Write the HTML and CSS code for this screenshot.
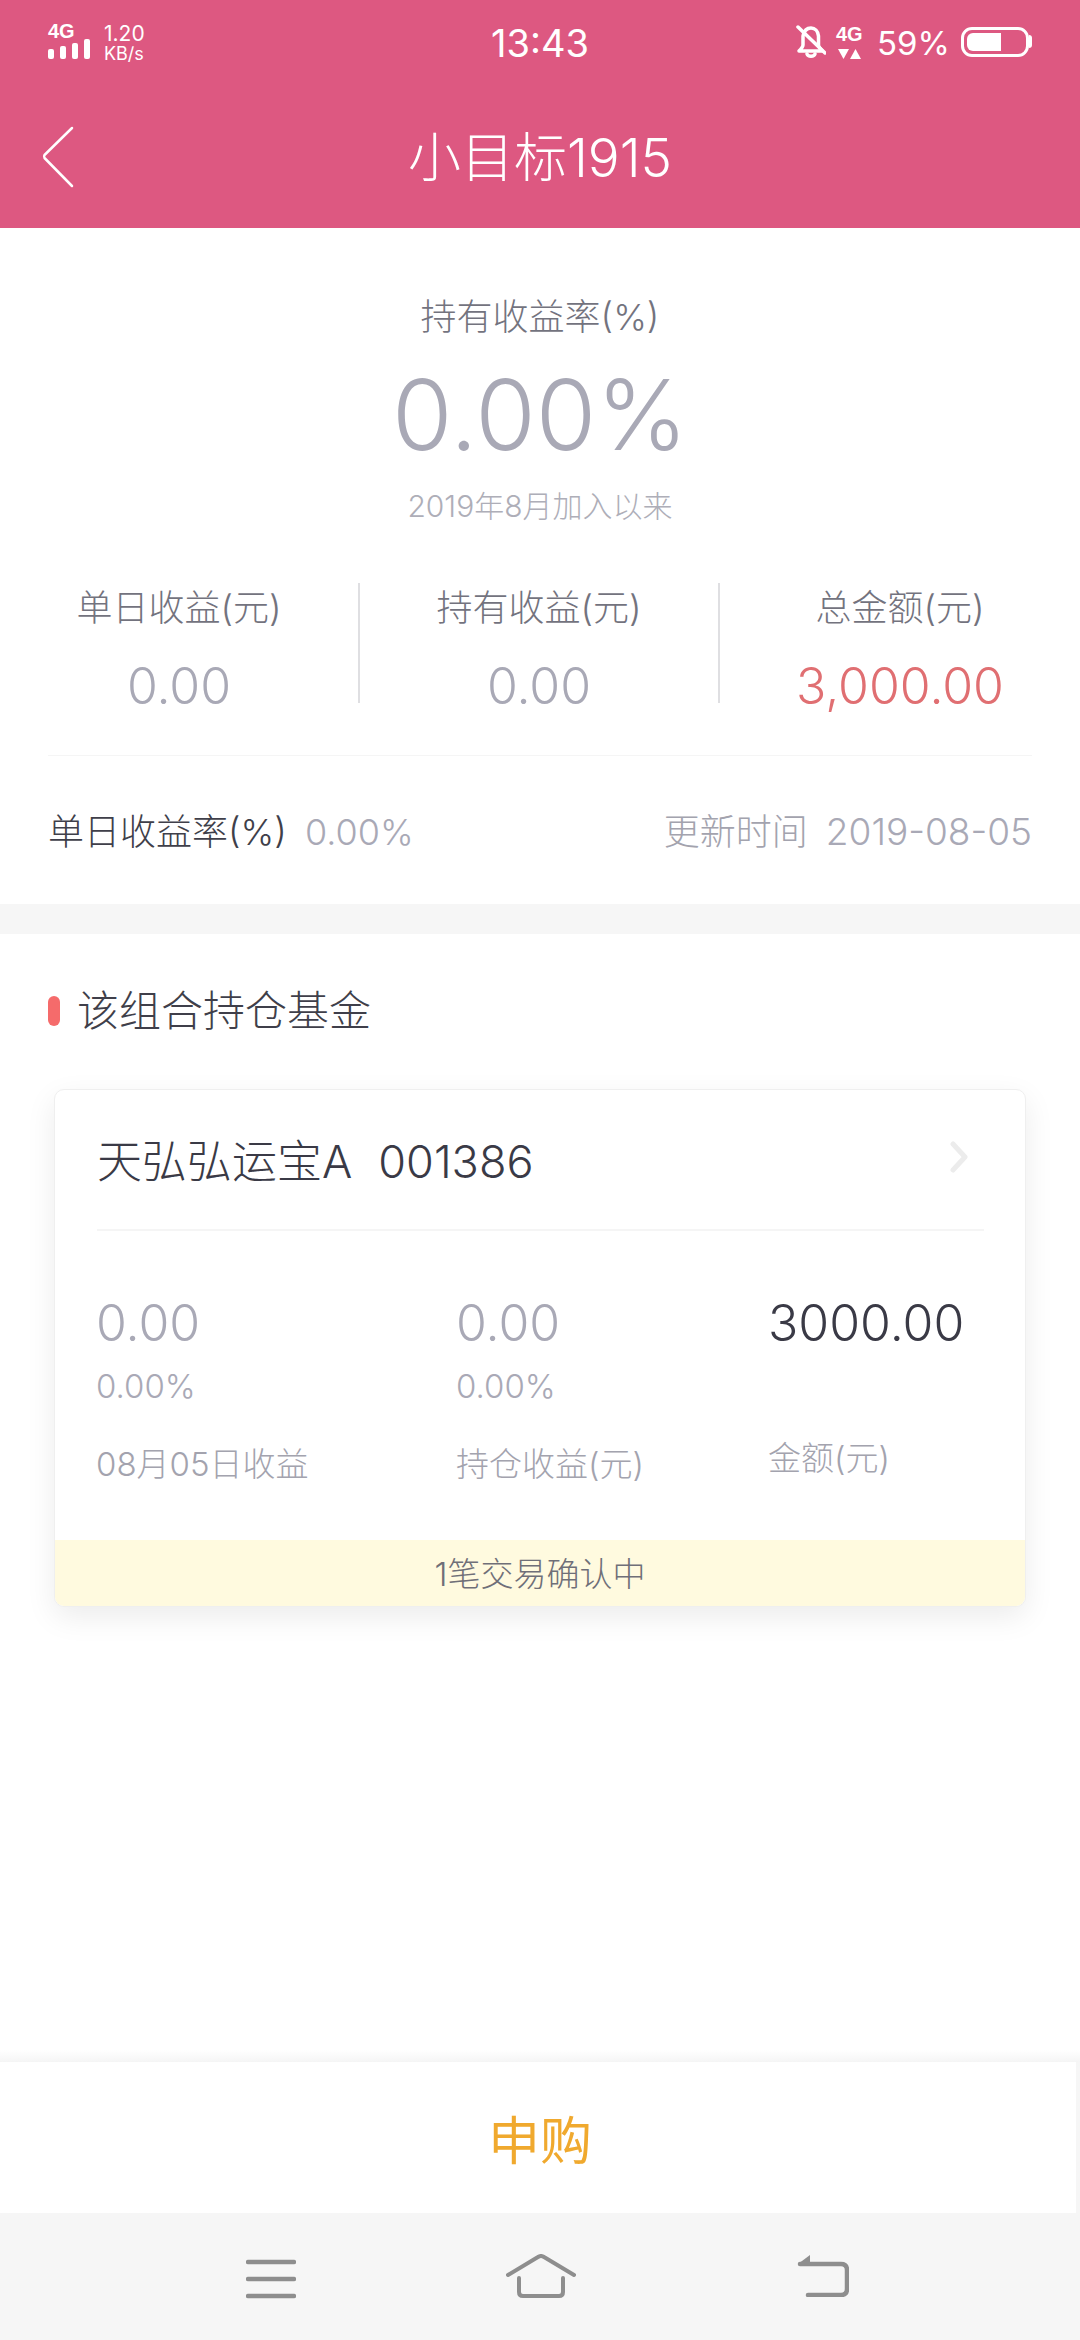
FILE: index.html
```html
<!DOCTYPE html>
<html lang="zh-CN">

<head>
    <meta charset="UTF-8">
    <meta name="viewport" content="width=device-width, initial-scale=1.0">
    <title>小目标1915</title>
    <link rel="stylesheet" href="styles.css">
</head>

<body>
    <div class="page">
        <header class="top">
            <div class="status">
                <div class="status-left">
                    <div class="signal">
                        <span class="net">4G</span>
                        <div class="bars">
                            <i class="bar bar1"></i>
                            <i class="bar bar2"></i>
                            <i class="bar bar3"></i>
                            <i class="bar bar4"></i>
                        </div>
                    </div>
                    <div class="speed">
                        <span class="speed-num">1.20</span>
                        <span class="speed-unit">KB/s</span>
                    </div>
                </div>
                <div class="clock">13:43</div>
                <div class="status-right">
                    <svg class="bell" width="30" height="34" viewBox="0 0 30 34" fill="none" stroke="#fff" stroke-width="3.500" stroke-linecap="round" stroke-linejoin="round">
                        <path d="M7 11c1-5 4-8 8-8s7 3 7.500 8v9c0 2 2 4 4 6H3c2-2 4-4 4-6z" />
                        <path d="M11 29c1 3 7 3 8 0" />
                        <path d="M2 2l27 26" />
                    </svg>
                    <div class="net-small">
                        <span class="net">4G</span>
                        <svg width="27" height="10" viewBox="0 0 27 10" fill="#fff">
                            <path d="M2 0h11l-5.500 10z" />
                            <path d="M19.500 0l5.500 10H14z" />
                        </svg>
                    </div>
                    <span class="percent">59%</span>
                    <div class="battery">
                        <div class="battery-level"></div>
                    </div>
                    <div class="battery-nub"></div>
                </div>
            </div>
            <div class="titlebar">
                <svg class="back" width="34" height="62" viewBox="0 0 34 62" fill="none" stroke="#fff" stroke-width="2.500" stroke-linecap="round" stroke-linejoin="round">
                    <path d="M31 2L3.500 29q-1 1.500 0 3L31 60" />
                </svg>
                <h1>小目标1915</h1>
            </div>
        </header>

        <main class="content">
            <section class="summary">
                <p class="summary-label">持有收益率(%)</p>
                <p class="summary-rate">0.00%</p>
                <p class="summary-since">2019年8月加入以来</p>
            </section>

            <section class="stats">
                <div class="stat">
                    <p class="stat-label">单日收益(元)</p>
                    <p class="stat-value">0.00</p>
                </div>
                <div class="stat">
                    <p class="stat-label">持有收益(元)</p>
                    <p class="stat-value">0.00</p>
                </div>
                <div class="stat">
                    <p class="stat-label">总金额(元)</p>
                    <p class="stat-value red">3,000.00</p>
                </div>
            </section>

            <section class="daily">
                <div class="daily-left">
                    <span class="daily-label">单日收益率(%)</span>
                    <span class="daily-rate">0.00%</span>
                </div>
                <div class="daily-right">
                    <span class="daily-update">更新时间</span>
                    <span class="daily-date">2019-08-05</span>
                </div>
            </section>

            <section class="holdings">
                <h2><i class="mark"></i>该组合持仓基金</h2>
                <div class="card">
                    <div class="card-head">
                        <span class="fund-name">天弘弘运宝A</span>
                        <span class="fund-code">001386</span>
                        <svg class="arrow" width="20" height="32" viewBox="0 0 20 32" fill="none" stroke="#ececec" stroke-width="5" stroke-linecap="round" stroke-linejoin="round">
                            <path d="M4 3l12 13L4 29" />
                        </svg>
                    </div>
                    <div class="card-body">
                        <div class="col">
                            <p class="col-value">0.00</p>
                            <p class="col-rate">0.00%</p>
                            <p class="col-label">08月05日收益</p>
                        </div>
                        <div class="col">
                            <p class="col-value">0.00</p>
                            <p class="col-rate">0.00%</p>
                            <p class="col-label">持仓收益(元)</p>
                        </div>
                        <div class="col">
                            <p class="col-value dark">3000.00</p>
                            <p class="col-label amount">金额(元)</p>
                        </div>
                    </div>
                    <div class="card-note">1笔交易确认中</div>
                </div>
            </section>
        </main>

        <div class="buy-shadow"></div>
        <div class="buy-wrap">
            <div class="buy">申购</div>
        </div>

        <nav class="navbar">
            <svg class="nav-menu" width="50" height="42" viewBox="0 0 50 42" fill="none" stroke="#8e8e8e" stroke-width="4.500" stroke-linecap="round">
                <path d="M2 4h46" />
                <path d="M2 21h46" />
                <path d="M2 38h46" />
            </svg>
            <svg class="nav-home" width="70" height="44" viewBox="0 0 70 44" fill="none" stroke="#8e8e8e" stroke-width="4" stroke-linecap="round" stroke-linejoin="round">
                <path d="M2 21L32 3q3-2 6 0l30 18" />
                <path d="M13 24v14q0 4 4 4h36q4 0 4-4V24" />
            </svg>
            <svg class="nav-back" width="52" height="42" viewBox="0 0 52 42" fill="none" stroke="#8e8e8e" stroke-width="4.500" stroke-linecap="round" stroke-linejoin="round">
                <path d="M1 9L13 0v9z" fill="#8e8e8e" stroke="none" />
                <path d="M3 9h41q6 0 6 6v19q0 6-6 6H11" />
            </svg>
        </nav>
    </div>
</body>

</html>
```

FILE: styles.css
```css
* {
    box-sizing: border-box;
}

body {
    margin: 0;
    font-family: Inter, "Noto Sans CJK SC", sans-serif;
    font-weight: 300;
    background-color: #fff;
}

p,
h1,
h2 {
    margin: 0;
    font-weight: 300;
}

.page {
    width: 1080px;
    height: 2340px;
    display: flex;
    flex-direction: column;
    overflow: hidden;
}

/* header */
.top {
    height: 228px;
    background-color: #dd5881;
    color: #fff;
}

.status {
    height: 80px;
    position: relative;
    display: flex;
    justify-content: space-between;
    padding: 22px 48px 0 48px;
}

.status-left {
    display: flex;
    gap: 11px;
}

.net {
    display: block;
    font-family: "Liberation Sans", sans-serif;
    font-size: 20px;
    line-height: 18px;
    font-weight: bold;
}

.signal {
    width: 45px;
}

.bars {
    height: 20px;
    display: flex;
    align-items: flex-end;
    gap: 6px;
    margin-top: -1px;
}

.bar {
    width: 6px;
    background-color: #fff;
    border-radius: 2px;
}

.bar1 {
    height: 10px;
}

.bar2 {
    height: 13px;
}

.bar3 {
    height: 16px;
}

.bar4 {
    height: 20px;
}

.speed {
    display: flex;
    flex-direction: column;
    margin-top: 2px;
    font-weight: 400;
}

.speed-num {
    font-size: 21px;
    line-height: 20px;
}

.speed-unit {
    font-size: 18px;
    line-height: 20px;
}

.clock {
    position: absolute;
    left: 0;
    right: 0;
    top: 22px;
    text-align: center;
    font-size: 38px;
    line-height: 42px;
    font-weight: 400;
}

.status-right {
    display: flex;
    align-items: flex-start;
}

.bell {
    margin-top: 3px;
    margin-right: 10px;
}

.net-small {
    width: 27px;
    margin-right: 14px;
    margin-top: 3px;
}

.net-small svg {
    display: block;
    margin-top: 6px;
}

.percent {
    font-size: 33px;
    line-height: 42px;
    width: 70px;
    margin-right: 14px;
    font-weight: 400;
}

.battery {
    width: 68px;
    height: 30px;
    margin-top: 5px;
    border: 3px solid #fff;
    border-radius: 11px;
    padding: 3px;
}

.battery-level {
    width: 34px;
    height: 18px;
    background-color: #fff;
    border-radius: 6px 0 0 6px;
}

.battery-nub {
    width: 3px;
    height: 13px;
    margin-top: 13px;
    background-color: #fff;
    border-radius: 0 3px 3px 0;
}

.titlebar {
    height: 148px;
    position: relative;
    text-align: center;
}

.titlebar h1 {
    font-size: 53px;
    line-height: 156px;
    color: #fff;
}

.back {
    position: absolute;
    left: 41px;
    top: 46px;
}

/* summary */
.content {
    flex: 1;
    overflow: hidden;
}

.summary {
    padding-top: 64px;
    text-align: center;
}

.summary-label {
    font-size: 36px;
    line-height: 50px;
    color: #73737e;
}

.summary-rate {
    margin-top: 18px;
    font-size: 98px;
    line-height: 110px;
    color: #a9a9b6;
}

.summary-since {
    margin-top: 16px;
    font-size: 30px;
    line-height: 40px;
    color: #aeaeb8;
}

.stats {
    display: grid;
    grid-template-columns: 360px 360px 360px;
    margin-top: 57px;
    margin-bottom: 52px;
}

.stat {
    height: 120px;
    text-align: center;
    border-right: 2px solid #dfdfe2;
}

.stat:last-child {
    border-right: none;
}

.stat-label {
    font-size: 36px;
    line-height: 50px;
    color: #73737e;
}

.stat-value {
    margin-top: 36px;
    font-size: 50px;
    line-height: 34px;
    color: #a9a9b6;
}

.stat-value.red {
    color: #e06f72;
}

.daily {
    height: 149px;
    margin: 0 48px;
    padding-bottom: 3px;
    border-top: 1px solid #f5f5f5;
    display: flex;
    justify-content: space-between;
    align-items: center;
    font-size: 36px;
}

.daily-label {
    color: #3f3f4a;
}

.daily-rate {
    margin-left: 8px;
    color: #a9a9b6;
}

.daily-update {
    color: #a3a3ae;
}

.daily-date {
    margin-left: 8px;
    font-size: 37px;
    color: #a9a9b6;
}

/* holdings */
.holdings {
    border-top: 30px solid #f6f6f6;
    padding: 52px 54px 0 54px;
}

.holdings h2 {
    display: flex;
    align-items: center;
    margin-left: -6px;
    font-size: 42px;
    line-height: 50px;
    color: #3f3f4a;
}

.mark {
    width: 12px;
    height: 30px;
    margin-right: 17px;
    background-color: #f56b6b;
    border-radius: 6px;
}

.card {
    height: 518px;
    margin-top: 53px;
    border: 1px solid #efefef;
    border-radius: 10px;
    box-shadow: 0 10px 30px rgba(0, 0, 0, 0.08);
    background-color: #fff;
    display: flex;
    flex-direction: column;
    overflow: hidden;
}

.card-head {
    height: 141px;
    margin: 0 41px 0 42px;
    padding-top: 36px;
    border-bottom: 2px solid #f5f5f5;
    display: flex;
    align-items: baseline;
    position: relative;
    color: #3a3a46;
    font-size: 45px;
}

.fund-code {
    margin-left: 26px;
}

.arrow {
    position: absolute;
    right: 15px;
    top: 51px;
}

.card-body {
    flex: 1;
    display: grid;
    grid-template-columns: 360px 312px 1fr;
    padding: 62px 0 0 41px;
}

.col-value {
    font-size: 50px;
    line-height: 60px;
    color: #a9a9b6;
}

.col-value.dark {
    color: #3a3a46;
}

.col-rate {
    margin-top: 13px;
    font-size: 33px;
    line-height: 40px;
    color: #a9a9b6;
}

.col-label {
    margin-top: 38px;
    font-size: 33px;
    line-height: 40px;
    color: #a3a3ae;
}

.col-label.amount {
    margin-top: 85px;
}

.card-note {
    height: 66px;
    background-color: #fffadf;
    text-align: center;
    font-size: 33px;
    line-height: 68px;
    color: #6f6f78;
}

/* bottom */
.buy-shadow {
    height: 12px;
    background: linear-gradient(#fff, #f5f5f5);
}

.buy-wrap {
    background-color: #f6f6f6;
    padding-right: 4px;
}

.buy {
    height: 151px;
    background-color: #fff;
    text-align: center;
    padding-left: 4px;
    font-size: 52px;
    line-height: 160px;
    font-weight: 400;
    color: #f0a92e;
}

.navbar {
    height: 127px;
    background-color: #f6f6f6;
    display: flex;
    align-items: flex-start;
    padding-left: 246px;
}

.nav-menu {
    margin-top: 45px;
}

.nav-home {
    margin-top: 41px;
    margin-left: 210px;
}

.nav-back {
    margin-top: 42px;
    margin-left: 221px;
}
```
